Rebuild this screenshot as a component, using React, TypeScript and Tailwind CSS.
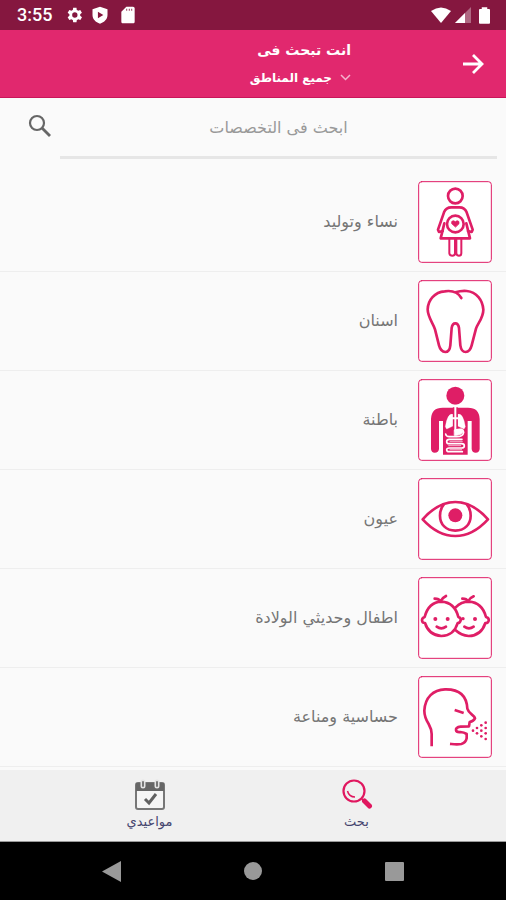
import type { ReactNode } from 'react';

interface Specialty {
  name: string;
  drawing: ReactNode;
}

const specialties: Specialty[] = [
  {
    name: 'نساء وتوليد',
    drawing: (
      <>
        <circle cx="150" cy="73" r="22" />
        <path d="M112 178 L101 181 L98 174 L116 122 Q122 107 138 107 H162 Q178 107 184 122 L202 174 L199 181 L188 178" />
        <path d="M117 155 L106 200 H194 L183 155" />
        <circle cx="150" cy="157" r="25" />
        <path d="M150 166 L139 156 Q137 147 144 147 Q148 147 150 151 Q152 147 156 147 Q163 147 161 156 Z" fill="currentColor" strokeWidth="2" />
        <path d="M132 201 V245 Q133 252 141 252 Q149 252 149 245 V201 M153 201 V245 Q154 252 161 252 Q168 252 168 245 V201" strokeWidth="6" />
      </>
    ),
  },
  {
    name: 'اسنان',
    drawing: (
      <path d="M168 82 C158 65 138 59 118 62 C88 64 68 88 67 116 C67 140 84 158 89 176 L101 224 Q106 243 120 244 Q133 244 135 224 L139 172 Q141 158 150 158 Q159 158 161 172 L165 224 Q168 244 181 244 Q194 243 199 224 L212 174 C217 158 234 142 234 117 C232 88 214 64 184 61 C174 60 160 62 150 65" />
    ),
  },
  {
    name: 'باطنة',
    drawing: (
      <>
        <circle cx="150" cy="78" r="27" fill="currentColor" stroke="none" />
        <path d="M77 238 V148 Q78 114 112 114 H188 Q222 114 223 148 V238 Q222 249 211 249 Q200 249 199 238 V154 H187 V255 H113 V154 H101 V238 Q100 249 88 249 Q78 249 77 238 Z" fill="currentColor" stroke="none" />
        <g stroke="white">
          <path d="M143 134 Q127 128 120 171 L124 178 L143 169 Z M157 134 Q173 128 180 171 L176 178 L157 169 Z" fill="white" strokeWidth="1" />
          <path d="M150 113 V176" stroke="#df1e66" strokeWidth="15" strokeLinecap="butt" />
          <path d="M150 108 V184 M138 146 H162" strokeWidth="6" />
          <path d="M150 181 Q174 174 175 188 Q173 201 154 201 H132 Q122 201 121 193" strokeWidth="5" />
          <path d="M148 181 Q172 176 172 188 Q167 197 148 197 Z" fill="white" strokeWidth="3" />
          <path d="M170 209 H132 Q124 209 124 216 Q124 222 132 222 H169 Q177 222 177 229 Q177 235 169 235 H132 Q124 235 124 240 Q124 246 132 246 H171" strokeWidth="5" />
          <path d="M134 215 H171 M130 228 H166 M134 240 H169" strokeWidth="2" />
        </g>
      </>
    ),
  },
  {
    name: 'عيون',
    drawing: (
      <>
        <path d="M52 152 Q98 100 150 100 Q202 100 248 152 Q202 202 150 202 Q98 202 52 152 Z" />
        <path d="M115 108 Q104 122 104 141 C104 167 122 186 150 186 C178 186 196 167 196 141 Q196 122 185 108" />
        <circle cx="150" cy="140" r="21" fill="currentColor" stroke="none" />
      </>
    ),
  },
  {
    name: 'اطفال وحديثي الولادة',
    drawing: (
      <>
        <path d="M151 119 Q167 102 191 102 Q230 104 242 148 Q252 151 250 159 Q247 167 240 166 Q228 204 190 205 Q167 203 151 188" />
        <path d="M188 101 Q184 93 171 93 M188 101 Q193 91 205 86" />
        <path d="M177 177 Q191 187 205 177" />
        <circle cx="209" cy="154" r="6" fill="currentColor" stroke="none" />
        <path d="M58 148 Q70 103 108 102 Q148 104 159 148 Q168 151 166 158 Q164 166 157 166 Q146 204 108 205 Q70 202 59 166 Q51 166 50 158 Q50 151 58 148 Z" fill="white" />
        <circle cx="173" cy="153" r="5" fill="currentColor" stroke="none" />
        <path d="M105 101 Q101 93 88 93 M105 101 Q110 91 122 85" />
        <circle cx="90" cy="154" r="6" fill="currentColor" stroke="none" />
        <circle cx="127" cy="154" r="6" fill="currentColor" stroke="none" />
        <path d="M94 177 Q108 187 122 177" />
      </>
    ),
  },
  {
    name: 'حساسية ومناعة',
    drawing: (
      <>
        <path d="M79 235 V202 Q79 188 70 172 Q57 151 57 132 C59 92 84 69 119 68 C158 67 184 84 186 126 Q189 136 199 143 Q208 150 209 155 Q205 163 193 166 L191 179 L166 180 Q151 182 152 190 Q153 197 165 196 Q176 197 184 202 V215 Q181 229 168 232 Q156 234 138 232" strokeLinecap="square" />
        <path d="M148 130 L175 139" strokeLinecap="butt" />
        <g fill="currentColor" stroke="none">
          <circle cx="203" cy="192" r="4" />
          <circle cx="215" cy="184" r="4" />
          <circle cx="215" cy="200" r="4" />
          <circle cx="228" cy="176" r="4" />
          <circle cx="228" cy="192" r="4" />
          <circle cx="228" cy="209" r="4" />
          <circle cx="241" cy="168" r="4" />
          <circle cx="241" cy="184" r="4" />
          <circle cx="241" cy="200" r="4" />
          <circle cx="241" cy="217" r="4" />
        </g>
      </>
    ),
  },
];

function StatusBar() {
  return (
    <div dir="ltr" className="flex h-[30px] items-center justify-between bg-[#85173f] pl-[17px] pr-4 text-white">
      <div className="flex items-center">
        <span className="mr-3 font-[Roboto] text-lg font-medium leading-none">3:55</span>
        <svg className="size-5" viewBox="0 0 24 24" fill="currentColor">
          <path d="M19.4 13c.1-.6.1-1.300 0-2l2.100-1.600-2-3.500-2.500 1a8 8 0 0 0-1.700-1L15 3.300h-4l-.4 2.600a8 8 0 0 0-1.700 1l-2.500-1-2 3.500L6.500 11c-.1.700-.1 1.300 0 2l-2.100 1.600 2 3.500 2.500-1a8 8 0 0 0 1.700 1l.4 2.600h4l.4-2.600a8 8 0 0 0 1.700-1l2.500 1 2-3.500zM13 15.200a3.200 3.200 0 1 1 0-6.400 3.200 3.200 0 0 1 0 6.400z" />
        </svg>
        <svg className="ml-1.5 size-5" viewBox="0 0 24 24" fill="currentColor">
          <path fillRule="evenodd" d="M12 2 3 5v7c0 5 3.800 8.600 9 10.500 5.200-1.900 9-5.500 9-10.500V5zM9.500 8l6.500 4-6.500 4z" />
        </svg>
        <svg className="ml-2 size-5" viewBox="0 0 24 24" fill="currentColor">
          <path fillRule="evenodd" d="M18 2h-8L4 8v12c0 1.100.9 2 2 2h12c1.100 0 2-.9 2-2V4c0-1.100-.9-2-2-2zM10 4.500h1v2.500h-1zm3 0h1v2.500h-1zm3 0h1v2.500h-1z" />
        </svg>
      </div>
      <div className="flex items-center">
        <svg className="h-4 w-5" viewBox="0 0 20 16" fill="currentColor">
          <path d="M0 4 Q10-3 20 4 L10 16z" />
        </svg>
        <svg className="ml-1 size-4" viewBox="0 0 16 16" fill="currentColor">
          <path d="M0 16 16 0v16z" opacity="0.35" />
          <path d="M0 16 10 6v10z" />
        </svg>
        <svg className="ml-2 h-[17px] w-[11px]" viewBox="0 0 12 18" fill="currentColor">
          <path d="M3 2V0h6v2h2q1 0 1 1v14q0 1-1 1H1q-1 0-1-1V3q0-1 1-1z" />
        </svg>
      </div>
    </div>
  );
}

function Header() {
  return (
    <header className="flex h-[68px] items-center gap-28 border-b border-[#c9165a] bg-[#e1286e] px-[22px] text-white">
      <button type="button" aria-label="رجوع">
        <svg className="h-5 w-[21px]" viewBox="0 0 21 20" fill="none" stroke="currentColor" strokeWidth="2.800">
          <path d="M0 10h19M10 1l9 9-9 9" />
        </svg>
      </button>
      <div className="flex flex-col items-start gap-1">
        <h1 className="text-sm font-bold leading-6">انت تبحث فى</h1>
        <div className="flex items-center gap-2">
          <svg className="h-[7px] w-[11px]" viewBox="0 0 11 7" fill="none" stroke="#f5b3cd" strokeWidth="1.500">
            <path d="m1 1 4.500 4.500L10 1" />
          </svg>
          <select aria-label="المنطقة" className="appearance-none bg-transparent text-xs font-bold leading-6">
            <option>جميع المناطق</option>
          </select>
        </div>
      </div>
    </header>
  );
}

function SearchBox() {
  return (
    <div className="flex h-[75px] items-start pl-7 pr-[9px] pt-2">
      <input
        type="text"
        aria-label="ابحث فى التخصصات"
        placeholder="ابحث فى التخصصات"
        className="h-[53px] min-w-0 flex-1 border-b-[3px] border-[#e6e6e6] bg-transparent pb-2 text-center text-base outline-none placeholder:text-[#999999]"
      />
      <button type="button" aria-label="بحث" className="mr-2 mt-2">
        <svg className="size-6" viewBox="0 0 24 24" fill="none" stroke="#666666" strokeWidth="2.200">
          <circle cx="9" cy="9" r="7" />
          <path d="m14 14 8 8" strokeWidth="2.800" />
        </svg>
      </button>
    </div>
  );
}

function SpecialtyRow({ name, drawing }: Specialty) {
  return (
    <li className="h-[99px] border-b border-[#eeeeee]">
      <a href="#" className="flex h-full items-center gap-5 px-[14px]">
        <svg
          className="h-[82px] w-[74px] shrink-0 text-[#df1e66]"
          viewBox="38 28 222 246"
          fill="none"
          stroke="currentColor"
          strokeWidth="8"
          strokeLinejoin="round"
          strokeLinecap="round"
        >
          <rect x="40" y="30" width="218" height="242" rx="9" fill="white" strokeWidth="3" />
          {drawing}
        </svg>
        <span className="text-base leading-6 text-[#757575]">{name}</span>
      </a>
    </li>
  );
}

function TabBar() {
  return (
    <nav className="grid h-[72px] grid-cols-2 border-b border-[#999999] bg-[#f0f0f0] px-[46px] text-[13px] leading-5 text-[#45456f]">
      <a href="#" className="flex flex-col items-center gap-0.5 pt-2">
        <svg className="size-8" viewBox="0 0 32 32" fill="none" stroke="#e0175f">
          <circle cx="13" cy="13" r="10.500" strokeWidth="2.200" />
          <path d="M6.500 13Q8 19 14 19" strokeWidth="1.500" />
          <path d="m21 21 3 3" strokeWidth="2" />
          <path d="m23.500 23 5 5" strokeWidth="5" strokeLinecap="round" />
        </svg>
        بحث
      </a>
      <a href="#" className="flex flex-col items-center gap-0.5 pt-2">
        <svg className="size-8" viewBox="0 0 32 32" fill="none">
          <rect x="2" y="5" width="28" height="26" rx="2" fill="#f5f5f5" stroke="#777777" strokeWidth="2" />
          <path d="M2 5h28v8H2z" fill="#666666" />
          <path d="M9 4v4M23 4v4" stroke="#e4e4e4" strokeWidth="5" strokeLinecap="round" />
          <path d="M9 4v4M23 4v4" stroke="#777777" strokeWidth="2" strokeLinecap="round" />
          <path d="m11 21 4 4 7-9" stroke="#606060" strokeWidth="3" />
        </svg>
        مواعيدي
      </a>
    </nav>
  );
}

function SystemBar() {
  return (
    <div dir="ltr" className="grid h-[58px] grid-cols-3 bg-black px-[41px] text-[#999999]">
      <button type="button" aria-label="Back" className="flex items-center justify-center">
        <svg className="h-[21px] w-[19px]" viewBox="0 0 19 21" fill="currentColor">
          <path d="M0 10.500 19 0v21z" />
        </svg>
      </button>
      <button type="button" aria-label="Home" className="flex items-center justify-center">
        <span className="size-[18px] rounded-full bg-[#999999]" />
      </button>
      <button type="button" aria-label="Recent apps" className="flex items-center justify-center">
        <span className="size-[19px] rounded-[1px] bg-[#999999]" />
      </button>
    </div>
  );
}

export default function App() {
  return (
    <div dir="rtl" className="flex min-h-screen flex-col bg-[#fafafa] font-['DejaVu_Sans',sans-serif]">
      <StatusBar />
      <Header />
      <main className="flex-1">
        <SearchBox />
        <ul>
          {specialties.map((item) => (
            <SpecialtyRow key={item.name} {...item} />
          ))}
        </ul>
      </main>
      <TabBar />
      <SystemBar />
    </div>
  );
}
